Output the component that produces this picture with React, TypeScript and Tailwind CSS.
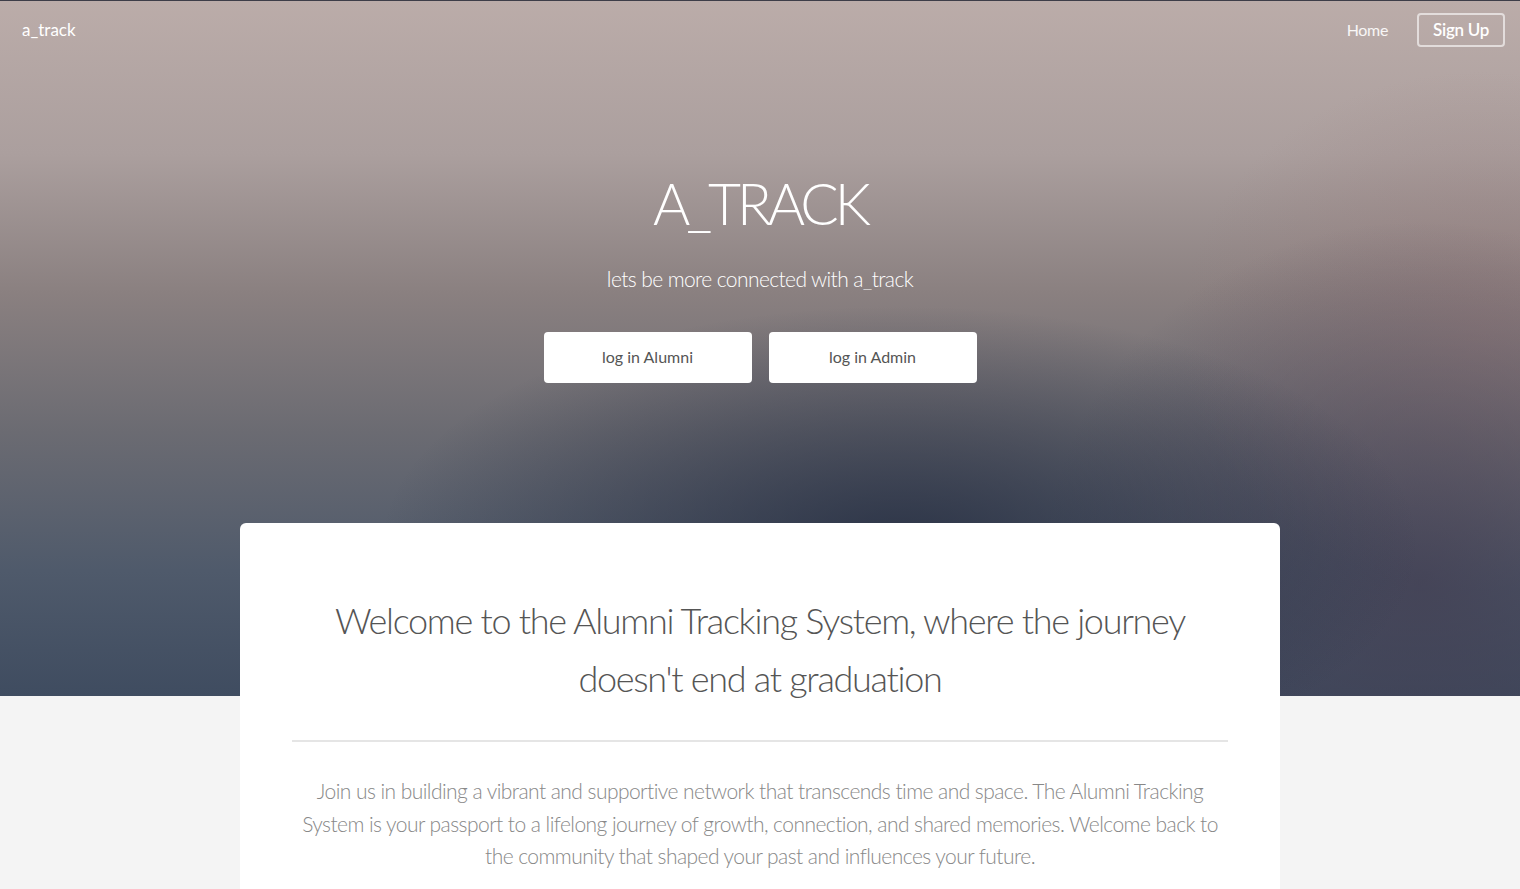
import React from "react";

const font = { fontFamily: "Lato, 'Open Sans', 'Liberation Sans', sans-serif" };

function NavBar() {
  return (
    <nav className="flex h-[57px] items-center justify-between pl-[22px] pr-[15px]">
      <a className="text-[17px] text-white">a_track</a>
      <div className="flex items-center gap-[29px]">
        <a className="text-[16px] tracking-[-0.3px] text-white/90">Home</a>
        <button
          type="button"
          className="h-[34px] rounded-[4px] border-2 border-white/60 px-[14px] text-[17px] font-semibold tracking-[-0.3px] text-white"
        >
          Sign Up
        </button>
      </div>
    </nav>
  );
}

function Hero() {
  return (
    <header className="relative h-[696px] border-t border-[#3d3d48] bg-[radial-gradient(ellipse_520px_240px_at_900px_545px,rgba(34,42,62,0.8),rgba(34,42,62,0)),radial-gradient(ellipse_380px_360px_at_1420px_580px,rgba(66,62,82,0.75),rgba(66,62,82,0)),radial-gradient(ellipse_300px_260px_at_1480px_330px,rgba(150,124,124,0.55),rgba(150,124,124,0)),linear-gradient(180deg,#bbaca9_0%,#ab9f9e_22%,#8a8080_42%,#6b6b72_62%,#4f5a6b_82%,#3f4c60_100%)]">
      <NavBar />
      <div className="flex flex-col items-center pt-[117px]">
        <h1 className="text-[57px] font-light leading-none tracking-[-4px] text-white">A_TRACK</h1>
        <p className="mt-[31px] text-[21px] font-light tracking-[-0.6px] text-white">
          lets be more connected with a_track
        </p>
        <div className="mt-[37px] flex gap-[17px]">
          <button type="button" className="h-[51px] w-[208px] rounded-[4px] bg-white text-[16px] text-[#555]">
            log in Alumni
          </button>
          <button type="button" className="h-[51px] w-[208px] rounded-[4px] bg-white text-[16px] text-[#555]">
            log in Admin
          </button>
        </div>
      </div>
    </header>
  );
}

export default function App() {
  return (
    <div className="min-h-[889px] overflow-hidden bg-[#f4f4f4]" style={font}>
      <Hero />
      <main className="relative -mt-[173px] flex justify-center">
        <section className="w-[1040px] rounded-t-[6px] bg-white px-[52px] pt-[68px] pb-[60px]">
          <h2 className="text-center text-[36px] font-light leading-[58px] tracking-[-1.3px] text-[#555]">
            Welcome to the Alumni Tracking System, where the journey
            <br />
            doesn't end at graduation
          </h2>
          <hr className="mt-[33px] border-t-2 border-[#e5e5e5]" />
          <p className="mt-[33px] text-center text-[21px] font-light leading-[32.5px] tracking-[-0.55px] text-[#888]">
            Join us in building a vibrant and supportive network that transcends time and space. The Alumni Tracking
            System is your passport to a lifelong journey of growth, connection, and shared memories. Welcome back to
            the community that shaped your past and influences your future.
          </p>
        </section>
      </main>
    </div>
  );
}
